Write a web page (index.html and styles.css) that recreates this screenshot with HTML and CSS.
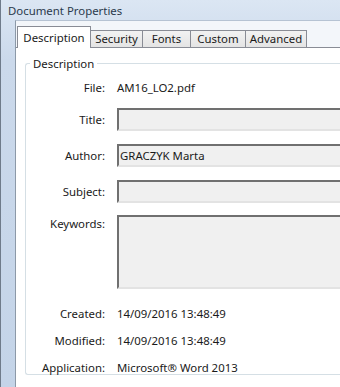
FILE: index.html
```html
<!DOCTYPE html>
<html lang="en">
<head>
    <meta charset="UTF-8">
    <title>Document Properties</title>
    <link rel="stylesheet" href="styles.css">
</head>
<body>
    <div class="window">
        <div class="titlebar">Document Properties</div>
        <div class="frame">
            <div class="client">
                <div class="tabs">
                    <div class="tab active tab-description">Description</div>
                    <div class="tab tab-security">Security</div>
                    <div class="tab tab-fonts">Fonts</div>
                    <div class="tab tab-custom">Custom</div>
                    <div class="tab tab-advanced">Advanced</div>
                </div>
                <div class="panel">
                    <fieldset class="group">
                        <legend>Description</legend>
                        <div class="rows">
                            <div class="row text-row">
                                <span class="label">File:</span>
                                <span class="value">AM16_LO2.pdf</span>
                            </div>
                            <div class="row field-row">
                                <span class="label">Title:</span>
                                <div class="field"></div>
                            </div>
                            <div class="row field-row">
                                <span class="label">Author:</span>
                                <div class="field">GRACZYK Marta</div>
                            </div>
                            <div class="row field-row">
                                <span class="label">Subject:</span>
                                <div class="field"></div>
                            </div>
                            <div class="row area-row">
                                <span class="label">Keywords:</span>
                                <div class="field area"></div>
                            </div>
                            <div class="row text-row">
                                <span class="label">Created:</span>
                                <span class="value">14/09/2016 13:48:49</span>
                            </div>
                            <div class="row text-row">
                                <span class="label">Modified:</span>
                                <span class="value">14/09/2016 13:48:49</span>
                            </div>
                            <div class="row text-row">
                                <span class="label">Application:</span>
                                <span class="value">Microsoft® Word 2013</span>
                            </div>
                        </div>
                    </fieldset>
                </div>
            </div>
        </div>
    </div>
</body>
</html>
```

FILE: styles.css
```css
body {
    margin: 0;
    width: 340px;
    height: 387px;
    overflow: hidden;
    font-family: "Noto Sans", "Open Sans", sans-serif;
    font-size: 11.4px;
    color: #1a1a1a;
}

.window {
    height: 387px;
    border-left: 1px solid #6f7b8a;
    background: linear-gradient(#dbe6f3, #cbd9eb 60px, #c4d4e8);
    display: flex;
    flex-direction: column;
}

.titlebar {
    height: 20px;
    line-height: 21px;
    padding-left: 7px;
    color: #2b3a4c;
    flex-shrink: 0;
}

.frame {
    flex: 1;
    padding-left: 14px;
    display: flex;
    min-height: 0;
}

.client {
    flex: 1;
    border-left: 1px solid #8c99a8;
    border-top: 1px solid #b6c3d3;
    background: #f3f6fa;
    display: flex;
    flex-direction: column;
    min-width: 0;
}

.tabs {
    display: flex;
    align-items: flex-end;
    height: 26px;
    padding-left: 1px;
    flex-shrink: 0;
}

.tab {
    box-sizing: border-box;
    height: 17px;
    line-height: 16px;
    text-align: center;
    border: 1px solid #898c95;
    border-bottom: none;
    border-left: none;
    background: linear-gradient(#f2f2f2, #e4e4e4);
}

.tab.active {
    height: 22px;
    line-height: 21px;
    border-left: 1px solid #898c95;
    background: #fff;
    position: relative;
    top: 1px;
}

.tab-description { width: 74px; }
.tab-security { width: 52px; }
.tab-fonts { width: 48px; }
.tab-custom { width: 55px; }
.tab-advanced { width: 61px; }

.panel {
    flex: 1;
    background: #fff;
    border-top: 1px solid #898c95;
    padding: 8px 0 0 9px;
    min-height: 0;
}

.group {
    margin: 0;
    padding: 0;
    border: 1px solid #d5dfe5;
    border-right: none;
    border-radius: 3px 0 0 3px;
    height: 317px;
}

.group legend {
    margin-left: 4px;
    padding: 0 3px;
}

.rows {
    display: flex;
    flex-direction: column;
    padding-top: 3px;
}

.row {
    display: grid;
    grid-template-columns: 79px 1fr;
    column-gap: 12px;
    align-items: center;
}

.label {
    text-align: right;
}

.text-row {
    height: 27px;
}

.field-row {
    height: 36px;
}

.field {
    height: 19px;
    line-height: 19px;
    padding-left: 1px;
    border-top: 2px solid #707070;
    border-left: 2px solid #707070;
    border-bottom: 2px solid #e3e3e3;
    background: #f0f0f0;
    white-space: nowrap;
}

.area-row {
    align-items: start;
    padding: 6px 0 11px;
}

.area-row .label {
    margin-top: 1px;
}

.field.area {
    height: 70px;
}
```
